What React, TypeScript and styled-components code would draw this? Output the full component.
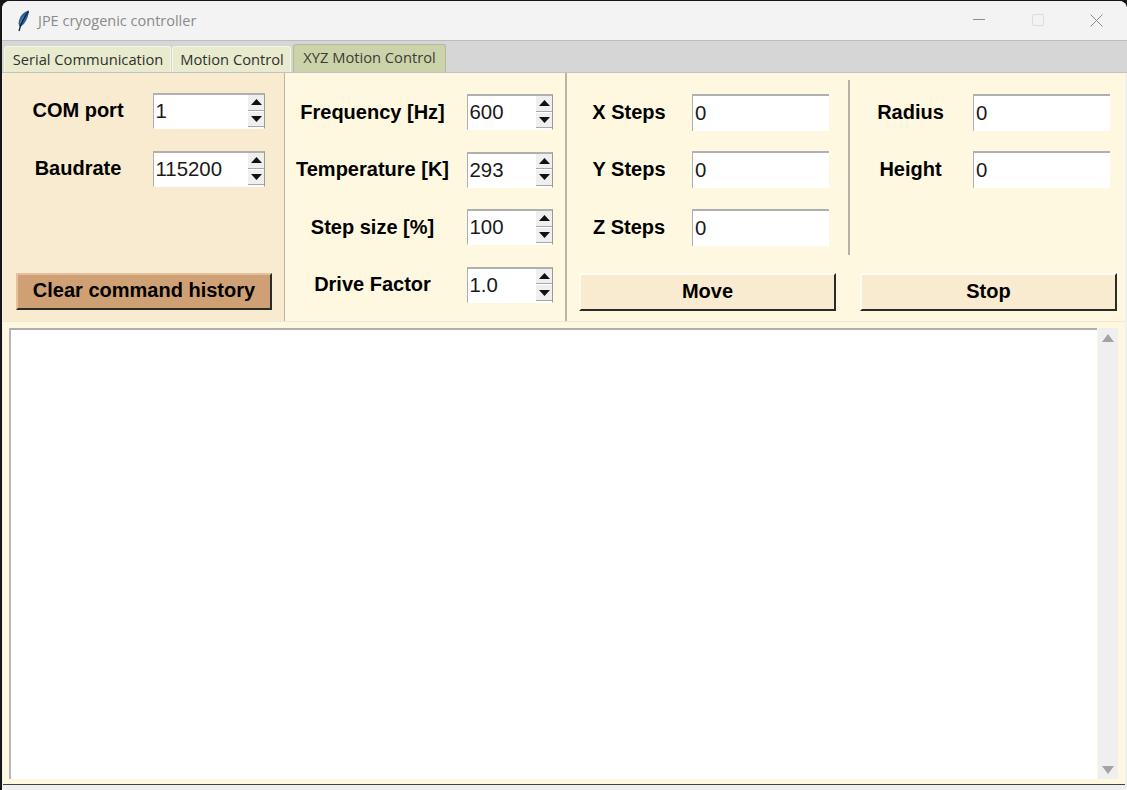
import React from "react";
import styled, { createGlobalStyle } from "styled-components";

const Global = createGlobalStyle`
  html, body { margin: 0; padding: 0; height: 100%; background: #161616; overflow: hidden; }
  #root { height: 790px; }
  * { box-sizing: border-box; }
`;
const Win = styled.div`
  width: 1125px; height: 789px; margin: 1px 0 0 2px; display: flex; flex-direction: column;
  background: #f0f0f0; border-radius: 8px 8px 0 0; overflow: hidden;
`;
const TitleBar = styled.div`
  height: 40px; flex: none; background: #f3f3f3; display: flex; align-items: center; padding: 0 1px 0 12px;
  border-bottom: 1px solid #bdbdbd;
`;
const TitleText = styled.span`
  font: 14.5px "Open Sans", sans-serif; color: #8a8a8a; margin-left: 6px; flex: 1; margin-top: -1px;
`;
const WinBtn = styled.div`
  width: 59px; height: 39px; display: flex; align-items: center; justify-content: center; margin-top: -1px;
`;
const TabStrip = styled.div`
  height: 32px; flex: none; background: #d6d6d6; display: flex; align-items: flex-end; padding-left: 2px; gap: 1px;
  border-bottom: 1px solid #c2c2c2;
`;
const Tab = styled.div<{ $active?: boolean; $w: number }>`
  width: ${p => p.$w}px; height: ${p => (p.$active ? 28 : 26)}px; margin-left: ${p => (p.$active ? 1 : 0)}px;
  background: ${p => (p.$active ? "#ccd3ab" : "#e8ebcd")};
  border: 1px solid ${p => (p.$active ? "#b4ba98" : "#f4f5e4")}; border-bottom: none; border-radius: 3px 3px 0 0;
  font: 14.7px "Open Sans", sans-serif; color: ${p => (p.$active ? "#3c3c30" : "#303030")}; text-align: center;
  line-height: ${p => (p.$active ? 25 : 24)}px; white-space: nowrap; padding-left: ${p => (p.$active ? 0 : 1)}px;
`;
const Body = styled.div`
  flex: 1; margin: 0 2px 5px 1px; background: #fef8e0; display: flex; flex-direction: column; border-bottom: 1px solid #45433a;
`;
const Top = styled.div`
  height: 249px; flex: none; display: flex; border-bottom: 1px solid #f0e9d0;
`;
const LeftPanel = styled.div`
  width: 282px; flex: none; background: #f9ebcf; padding: 20px 12px 11px 13px; display: flex; flex-direction: column;
  border-right: 1px solid #b9b6a6;
`;
const LeftFields = styled.div`
  flex: 1; display: flex; flex-direction: column; gap: 22px;
`;
const MidPanel = styled.div`
  width: 282px; flex: none; padding: 21px 12px 0 7px; display: flex; flex-direction: column; gap: 21.6px;
  border-right: 2px solid #b9b6a6;
`;
const RightPanel = styled.div`
  flex: 1; display: flex; flex-direction: column; padding: 7px 8px 10px 12px; justify-content: space-between;
`;
const Row = styled.div<{ $label: number; $gap: number }>`
  display: grid; grid-template-columns: ${p => p.$label}px 1fr; column-gap: ${p => p.$gap}px; align-items: center;
`;
const Label = styled.div<{ $raised?: boolean }>`
  font: bold 20px "Liberation Sans", Arial, sans-serif; color: #000; text-align: center; white-space: nowrap;
  margin-top: ${p => (p.$raised ? -2 : 0)}px;
`;
const Spin = styled.div<{ $w: number }>`
  width: ${p => p.$w}px; height: 36px; background: #fff; display: flex; border: 1px solid #b0b0b0; border-bottom: 1px solid #fff; border-right: 1px solid #9a9a9a;
  border-top-width: 2px;
`;
const Val = styled.div`
  flex: 1; font: 20.4px "Liberation Sans", Arial, sans-serif; color: #1a1a1a; line-height: 33px; padding-left: 1.5px;
`;
const Arrows = styled.div`
  width: 16px; flex: none; display: flex; flex-direction: column; gap: 1px; background: #fff; margin: 0 0 1px 0;
`;
const Arrow = styled.div`
  flex: 1; background: #efefef; display: flex; align-items: center; justify-content: center;
  border-bottom: 1px solid #a8a8a8;
`;
const Field = styled.div<{ $w: number }>`
  width: ${p => p.$w}px; height: 37px; background: #fff; border-top: 2px solid #b0b0b0; border-left: 1px solid #b0b0b0;
  font: 20.4px "Liberation Sans", Arial, sans-serif; color: #1a1a1a; line-height: 35px; padding-left: 2px;
`;
const ActionButton = styled.div<{ $clear?: boolean }>`
  height: ${p => (p.$clear ? 37 : 38)}px; flex: ${p => (p.$clear ? "none" : 1)};
  background: ${p => (p.$clear ? "#cfa073" : "#f9ebcf")}; display: flex; align-items: center; justify-content: center;
  font: bold 20px "Liberation Sans", Arial, sans-serif; color: #000; padding-bottom: 2px;
  border-top: 2px solid ${p => (p.$clear ? "#e3c19f" : "#fefcf2")};
  border-left: 2px solid ${p => (p.$clear ? "#e3c19f" : "#fefcf2")};
  border-right: 2px solid #2a2a2a; border-bottom: 2px solid #2a2a2a;
`;
const Fields = styled.div`
  display: flex; height: 175px;
`;
const FieldCol = styled.div<{ $w: number }>`
  width: ${p => p.$w}px; flex: none; padding-top: 14px; display: flex; flex-direction: column; gap: 20.3px;
`;
const Divider = styled.div`
  width: 2px; flex: none; background: #b4b2a6; margin-right: 11px;
`;
const Buttons = styled.div`
  display: flex; gap: 24px;
`;
const LogArea = styled.div`
  flex: 1; margin: 6px 7px 5px 6px; display: flex; min-height: 0;
`;
const Log = styled.div`
  flex: 1; background: #fff; border-top: 2px solid #aeaeae; border-left: 2px solid #b6b6b6;
`;
const ScrollBar = styled.div`
  width: 20px; flex: none; background: #efefef; display: flex; flex-direction: column; justify-content: space-between;
  align-items: center; padding: 6px 0 5px; margin-left: 1px;
`;
const Feather = () => (
  <svg width="18" height="22" viewBox="0 0 18 22">
    <path d="M15 0.500C9.500 1.500 5 6.500 4.500 13.500L5.500 17C10 15.500 14 9.500 15 .5Z" fill="#2f6199" />
    <path d="M13 4C10 6 7.500 9.500 6.500 13" stroke="#6fa0d0" strokeWidth="1" fill="none" />
    <path d="M14.500 1.500C10.500 6.500 7 13 5 21" stroke="#14233a" strokeWidth="1.300" fill="none" />
  </svg>
);
const Tri = ({ up }: { up?: boolean }) => (
  <svg width="11" height="6" viewBox="0 0 11 6">
    <path d={up ? "M5.500 0 11 6H0Z" : "M0 0H11L5.500 6Z"} fill="#111" />
  </svg>
);
const ScrollTri = ({ up }: { up?: boolean }) => (
  <svg width="12" height="8" viewBox="0 0 12 8">
    <path d={up ? "M6 0 12 8H0Z" : "M0 0H12L6 8Z"} fill="#a3a3a3" />
  </svg>
);
const SpinBox = ({ value, w }: { value: string; w: number }) => (
  <Spin $w={w}>
    <Val>{value}</Val>
    <Arrows>
      <Arrow><Tri up /></Arrow>
      <Arrow><Tri /></Arrow>
    </Arrows>
  </Spin>
);

export default function App() {
  return (
    <>
      <Global />
      <Win>
        <TitleBar>
          <Feather />
          <TitleText>JPE cryogenic controller</TitleText>
          <WinBtn>
            <svg width="12" height="2"><path d="M0 .5H12" stroke="#8c8c8c" /></svg>
          </WinBtn>
          <WinBtn>
            <svg width="12" height="12"><rect x=".5" y=".5" width="11" height="11" rx="1.500" fill="none" stroke="#dcdcdc" /></svg>
          </WinBtn>
          <WinBtn>
            <svg width="13" height="13"><path d="M.5.5 12.500 12.500M12.500.5.500 12.500" stroke="#8c8c8c" /></svg>
          </WinBtn>
        </TitleBar>
        <TabStrip>
          <Tab $w={167}>Serial Communication</Tab>
          <Tab $w={119}>Motion Control</Tab>
          <Tab $active $w={153}>XYZ Motion Control</Tab>
        </TabStrip>
        <Body>
          <Top>
            <LeftPanel>
              <LeftFields>
                <Row $label={124} $gap={13}>
                  <Label $raised>COM port</Label>
                  <SpinBox value="1" w={112} />
                </Row>
                <Row $label={124} $gap={13}>
                  <Label $raised>Baudrate</Label>
                  <SpinBox value="115200" w={112} />
                </Row>
              </LeftFields>
              <ActionButton $clear>Clear command history</ActionButton>
            </LeftPanel>
            <MidPanel>
              <Row $label={161} $gap={14}><Label>Frequency [Hz]</Label><SpinBox value="600" w={86} /></Row>
              <Row $label={161} $gap={14}><Label>Temperature [K]</Label><SpinBox value="293" w={86} /></Row>
              <Row $label={161} $gap={14}><Label>Step size [%]</Label><SpinBox value="100" w={86} /></Row>
              <Row $label={161} $gap={14}><Label>Drive Factor</Label><SpinBox value="1.0" w={86} /></Row>
            </MidPanel>
            <RightPanel>
              <Fields>
                <FieldCol $w={269}>
                  <Row $label={100} $gap={13}><Label>X Steps</Label><Field $w={137}>0</Field></Row>
                  <Row $label={100} $gap={13}><Label>Y Steps</Label><Field $w={137}>0</Field></Row>
                  <Row $label={100} $gap={13}><Label>Z Steps</Label><Field $w={137}>0</Field></Row>
                </FieldCol>
                <Divider />
                <FieldCol $w={250}>
                  <Row $label={99} $gap={13}><Label>Radius</Label><Field $w={137}>0</Field></Row>
                  <Row $label={99} $gap={13}><Label>Height</Label><Field $w={137}>0</Field></Row>
                </FieldCol>
              </Fields>
              <Buttons>
                <ActionButton>Move</ActionButton>
                <ActionButton>Stop</ActionButton>
              </Buttons>
            </RightPanel>
          </Top>
          <LogArea>
            <Log />
            <ScrollBar>
              <ScrollTri up />
              <ScrollTri />
            </ScrollBar>
          </LogArea>
        </Body>
      </Win>
    </>
  );
}
